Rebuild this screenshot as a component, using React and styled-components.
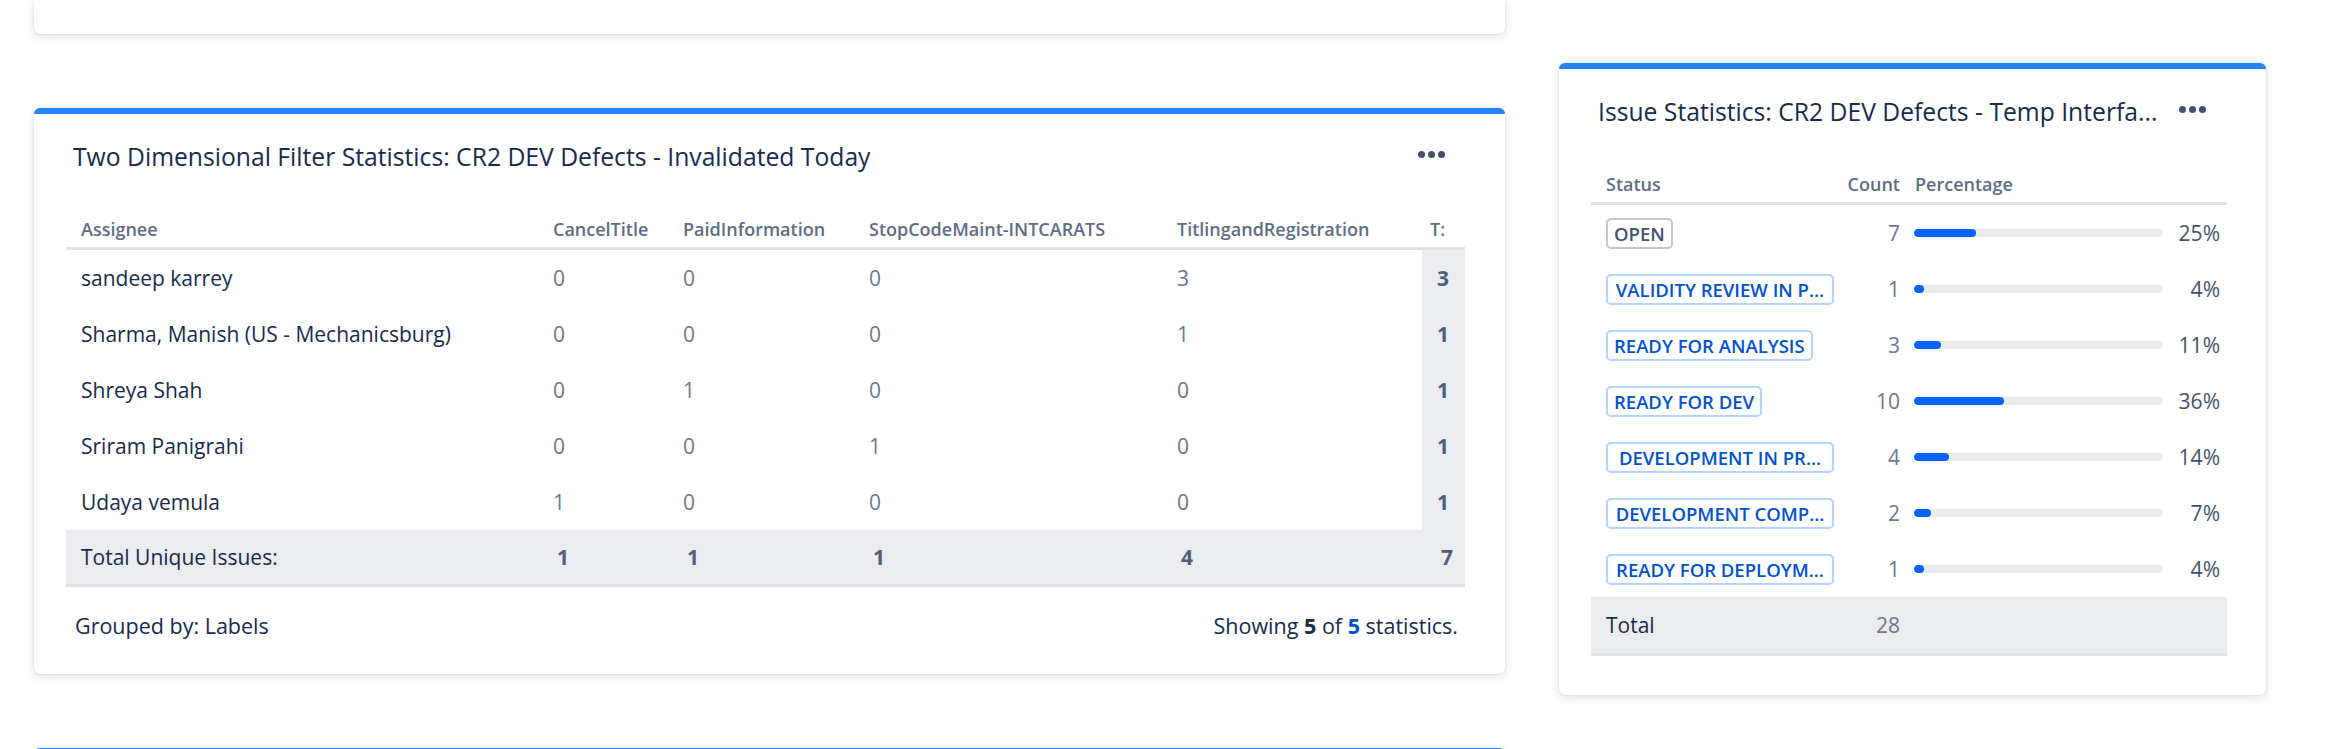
import React from "react";
import styled, { createGlobalStyle } from "styled-components";

const GlobalStyle = createGlobalStyle`
  html, body {
    margin: 0;
    padding: 0;
    background: #ffffff;
  }
  body {
    font-family: "Open Sans", "Segoe UI", "Noto Sans", sans-serif;
    color: #172b4d;
    overflow: hidden;
  }
`;

const twoDimColumns = ["Assignee", "CancelTitle", "PaidInformation", "StopCodeMaint-INTCARATS", "TitlingandRegistration"];

const twoDimRows = [
  { name: "sandeep karrey", values: [0, 0, 0, 3], total: 3 },
  { name: "Sharma, Manish (US - Mechanicsburg)", values: [0, 0, 0, 1], total: 1 },
  { name: "Shreya Shah", values: [0, 1, 0, 0], total: 1 },
  { name: "Sriram Panigrahi", values: [0, 0, 1, 0], total: 1 },
  { name: "Udaya vemula", values: [1, 0, 0, 0], total: 1 },
];

const uniqueTotals = [1, 1, 1, 4, 7];

const statusRows = [
  { label: "OPEN", count: 7, pct: 25, neutral: true },
  { label: "VALIDITY REVIEW IN P...", count: 1, pct: 4, cut: true },
  { label: "READY FOR ANALYSIS", count: 3, pct: 11 },
  { label: "READY FOR DEV", count: 10, pct: 36 },
  { label: "DEVELOPMENT IN PR...", count: 4, pct: 14, cut: true },
  { label: "DEVELOPMENT COMP...", count: 2, pct: 7, cut: true },
  { label: "READY FOR DEPLOYM...", count: 1, pct: 4, cut: true },
];

const MoreIcon = () => (
  <svg width="27" height="7" viewBox="0 0 27 7" fill="#42526e">
    <circle cx="3.5" cy="3.5" r="3.5" />
    <circle cx="13.5" cy="3.5" r="3.5" />
    <circle cx="23.5" cy="3.5" r="3.5" />
  </svg>
);

const App = () => {
  return (
    <>
      <GlobalStyle />
      <Page>
        <LeftColumn>
          <StubCard />

          <Card $accent>
            <GadgetHeader>
              <GadgetTitle>Two Dimensional Filter Statistics: CR2 DEV Defects - Invalidated Today</GadgetTitle>
              <MoreButton>
                <MoreIcon />
              </MoreButton>
            </GadgetHeader>

            <StatGrid $cols="472px 130px 186px 308px 260px 43px">
              {twoDimColumns.map(col => (
                <HeadCell key={col}>{col}</HeadCell>
              ))}
              <HeadCell $padLeft={8}>T:</HeadCell>

              {twoDimRows.map(row => (
                <React.Fragment key={row.name}>
                  <BodyCell>{row.name}</BodyCell>
                  {row.values.map((v, i) => (
                    <BodyCell key={i} $muted>
                      {v}
                    </BodyCell>
                  ))}
                  <BodyCell $sum>{row.total}</BodyCell>
                </React.Fragment>
              ))}

              <TotalCell>Total Unique Issues:</TotalCell>
              {uniqueTotals.map((v, i) => (
                <TotalCell key={i} $strong>
                  {v}
                </TotalCell>
              ))}
            </StatGrid>

            <GadgetFooter>
              <span>Grouped by: Labels</span>
              <span>
                Showing <b>5</b> of <LinkNum>5</LinkNum> statistics.
              </span>
            </GadgetFooter>
          </Card>

          <Card $accent style={{ height: 200 }} />
        </LeftColumn>

        <RightColumn>
          <Card $accent>
            <GadgetHeader>
              <GadgetTitle>Issue Statistics: CR2 DEV Defects - Temp Interfa...</GadgetTitle>
              <MoreButton>
                <MoreIcon />
              </MoreButton>
            </GadgetHeader>

            <StatGrid $cols="249px 67px 320px">
              <HeadCell>Status</HeadCell>
              <HeadCell $right>Count</HeadCell>
              <HeadCell $padLeft={8}>Percentage</HeadCell>

              {statusRows.map(row => (
                <React.Fragment key={row.label}>
                  <BodyCell>
                    <Lozenge $neutral={row.neutral} $cut={row.cut}>
                      {row.label}
                    </Lozenge>
                  </BodyCell>
                  <BodyCell $right $muted>
                    {row.count}
                  </BodyCell>
                  <PercentCell>
                    <BarTrack>
                      <BarFill style={{ width: `${Math.max(row.pct, 3.5)}%` }} />
                    </BarTrack>
                    <PercentValue>{row.pct}%</PercentValue>
                  </PercentCell>
                </React.Fragment>
              ))}

              <TotalCell $tall>Total</TotalCell>
              <TotalCell $tall $right $muted>
                28
              </TotalCell>
              <TotalCell $tall />
            </StatGrid>
            <CardBottom />
          </Card>
        </RightColumn>
      </Page>
    </>
  );
};

export default App;

const Page = styled.div`
  display: flex;
  align-items: flex-start;
  gap: 54px;
  width: 2345px;
  height: 749px;
  padding-left: 34px;
  box-sizing: border-box;
  overflow: hidden;
`;

const LeftColumn = styled.div`
  width: 1471px;
  display: flex;
  flex-direction: column;
  gap: 74px;
`;

const RightColumn = styled.div`
  width: 707px;
  padding-top: 63px;
`;

const Card = styled.section`
  background: #ffffff;
  border-radius: 6px;
  border-top: ${p => (p.$accent ? "6px solid #2684ff" : "none")};
  box-shadow: 0 3px 8px rgba(9, 30, 66, 0.13), 0 0 2px rgba(9, 30, 66, 0.16);
  padding: 0 40px 0 32px;
`;

const StubCard = styled(Card)`
  height: 34px;
  border-radius: 0 0 6px 6px;
`;

const GadgetHeader = styled.header`
  display: flex;
  align-items: center;
  justify-content: space-between;
  gap: 10px;
  padding: 26px 20px 0 7px;
`;

const GadgetTitle = styled.h2`
  flex: 0 1 auto;
  min-width: 0;
  margin: 0;
  font-size: 24.7px;
  font-weight: 500;
  line-height: 34px;
  color: #172b4d;
  white-space: nowrap;
  overflow: hidden;
  text-overflow: ellipsis;
`;

const MoreButton = styled.div`
  display: flex;
  flex-shrink: 0;
  margin-bottom: 5px;
`;

const StatGrid = styled.div`
  display: grid;
  grid-template-columns: ${p => p.$cols};
  margin-top: 37px;
`;

const HeadCell = styled.div`
  height: 36px;
  display: flex;
  align-items: center;
  justify-content: ${p => (p.$right ? "flex-end" : "flex-start")};
  padding: ${p => (p.$right ? "0 7px 0 0" : `0 0 0 ${p.$padLeft ?? 15}px`)};
  border-bottom: 3px solid #dfe1e6;
  font-size: 18px;
  font-weight: 600;
  color: #5e6c84;
  white-space: nowrap;
  overflow: hidden;
`;

const BodyCell = styled.div`
  height: 56px;
  display: flex;
  align-items: center;
  justify-content: ${p => (p.$right ? "flex-end" : "flex-start")};
  padding: ${p => (p.$right ? "0 7px 0 0" : "0 0 0 15px")};
  font-size: 21px;
  font-weight: ${p => (p.$sum ? 700 : 400)};
  color: ${p => (p.$sum ? "#505f79" : p.$muted ? "#6b778c" : "#172b4d")};
  background: ${p => (p.$sum ? "#ebecf0" : "transparent")};
  white-space: nowrap;
  overflow: hidden;
`;

const TotalCell = styled.div`
  height: ${p => (p.$tall ? 56 : 54)}px;
  display: flex;
  align-items: center;
  justify-content: ${p => (p.$right ? "flex-end" : "flex-start")};
  padding: ${p => (p.$right ? "0 7px 0 0" : p.$strong ? "0 0 0 19px" : "0 0 0 15px")};
  background: #ebecf0;
  border-bottom: 3px solid #dfe1e6;
  font-size: 21px;
  font-weight: ${p => (p.$strong ? 700 : 400)};
  color: ${p => (p.$strong ? "#505f79" : p.$muted ? "#6b778c" : "#172b4d")};
  white-space: nowrap;
`;

const GadgetFooter = styled.footer`
  display: flex;
  justify-content: space-between;
  margin-top: 24px;
  padding: 0 7px 33px 9px;
  font-size: 21.5px;
  line-height: 30px;
  color: #172b4d;

  b {
    font-weight: 700;
  }
`;

const LinkNum = styled.b`
  color: #0052cc;
`;

const Lozenge = styled.span`
  display: inline-block;
  box-sizing: border-box;
  width: ${p => (p.$cut ? "228px" : "auto")};
  max-width: 228px;
  height: 31px;
  padding: 0 6px;
  border: 2px solid ${p => (p.$neutral ? "#c1c7d0" : "#b3d4ff")};
  border-radius: 5px;
  font-size: 18.5px;
  font-weight: 600;
  line-height: 27px;
  text-align: ${p => (p.$cut ? "center" : "left")};
  color: ${p => (p.$neutral ? "#42526e" : "#0052cc")};
  white-space: nowrap;
  overflow: hidden;
  text-overflow: ellipsis;
`;

const PercentCell = styled.div`
  height: 56px;
  display: flex;
  align-items: center;
  padding: 0 7px;
`;

const BarTrack = styled.div`
  flex: 1;
  height: 8px;
  border-radius: 4px;
  background: #ebecf0;
  overflow: hidden;
`;

const BarFill = styled.div`
  height: 100%;
  border-radius: 4px;
  background: #0065ff;
`;

const PercentValue = styled.span`
  width: 57px;
  text-align: right;
  font-size: 21px;
  color: #42526e;
`;

const CardBottom = styled.div`
  height: 39px;
`;
